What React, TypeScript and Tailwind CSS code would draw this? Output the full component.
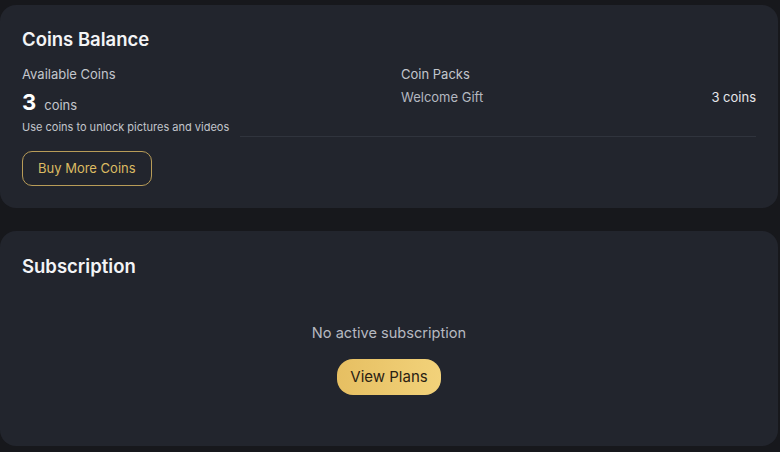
const App = () => {
  return (
    <div className="w-[780px] h-[452px] bg-[#17181c] pt-[5px] pr-[2px] flex flex-col gap-[23px] font-['Inter','Noto_Sans',sans-serif] overflow-hidden">
      {/* coins balance */}
      <div className="bg-[#22252d] rounded-2xl pt-[20px] pb-[22px] px-[22px]">
        <h2 className="text-[18.5px] leading-[28px] font-semibold text-[#f3f4f6]">Coins Balance</h2>
        <div className="grid grid-cols-2 mt-[11px]">
          <div>
            <p className="text-[13px] leading-[20px] text-[#c3c6cc]">Available Coins</p>
            <div className="flex items-baseline gap-[8px] mt-[4px]">
              <span className="text-[22px] leading-[28px] font-bold text-white">3</span>
              <span className="text-[13px] text-[#c3c6cc]">coins</span>
            </div>
            <p className="text-[11px] leading-[16px] text-[#c3c6cc] mt-[3px]">Use coins to unlock pictures and videos</p>
          </div>
          <div className="pl-[12px]">
            <p className="text-[13px] leading-[20px] text-[#c3c6cc]">Coin Packs</p>
            <div className="flex justify-between mt-[3px] text-[13px] leading-[20px]">
              <span className="text-[#b4b8c0]">Welcome Gift</span>
              <span className="text-[#e5e7eb]">3 coins</span>
            </div>
          </div>
        </div>
        <div className="h-px bg-[#30343d] ml-[218px] mt-[1px]" />
        <button className="mt-[14px] h-[35px] px-[15px] rounded-[10px] border border-[#b89c58] text-[#dcbb62] text-[13px]">
          Buy More Coins
        </button>
      </div>

      {/* subscription */}
      <div className="bg-[#22252d] rounded-2xl pt-[21px] pb-[51px] px-[22px]">
        <h2 className="text-[18.5px] leading-[28px] font-semibold text-[#f3f4f6]">Subscription</h2>
        <div className="flex flex-col items-center mt-[42px]">
          <p className="text-[14.6px] leading-[22px] text-[#b6b9c0]">No active subscription</p>
          <button className="mt-[15px] h-[36px] px-[13px] rounded-[16px] bg-gradient-to-r from-[#e6bf62] to-[#f2d27a] text-[#2a2113] text-[15px]">
            View Plans
          </button>
        </div>
      </div>
    </div>
  );
};

export default App;
